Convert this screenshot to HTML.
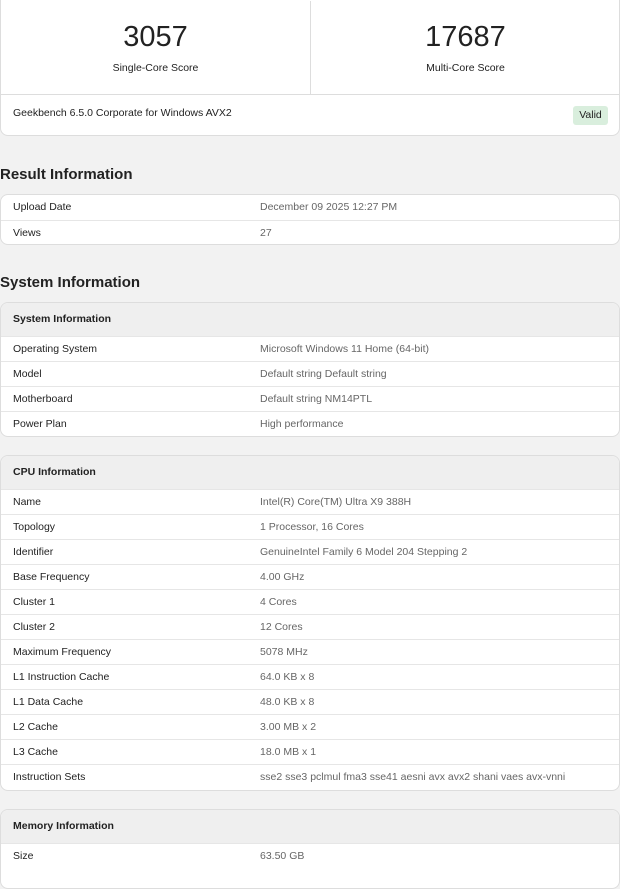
<!DOCTYPE html>
<html><head><style>
body{margin:0;background:#f2f2f2;font-family:"Liberation Sans",sans-serif;font-size:10.5px;color:#222;width:620px;height:867px;overflow:hidden;position:relative}
.card{position:absolute;left:0;width:620px;background:#fff;border:1px solid #ddd;border-radius:8px;overflow:hidden;box-sizing:border-box}
.row{height:25px;line-height:25px;border-top:1px solid #e6e6e6;position:relative;padding-left:12px;box-sizing:border-box}
.row:first-child{border-top:none}
.row span{position:absolute;left:259px;color:#666}
.hd{height:33px;line-height:33px;background:#efefef;padding-left:12px;font-weight:bold;box-sizing:border-box}
h2{position:absolute;left:0;margin:0;font-size:15px;font-weight:bold;color:#222}
.sc{position:absolute;top:0;width:309px;height:93px;text-align:center}
.sc b{display:block;font-weight:normal;font-size:29px;margin-top:19px;line-height:34px;color:#222}
.sc i{display:block;font-style:normal;margin-top:8px;color:#222}
</style></head><body>
<div class="card" style="top:-8px;height:144px">
 <div class="sc" style="left:0;top:8px"><b>3057</b><i>Single-Core Score</i></div>
 <div class="sc" style="left:309px;top:8px;border-left:1px solid #ddd"><b>17687</b><i>Multi-Core Score</i></div>
 <div style="position:absolute;top:101px;left:0;right:0;border-top:1px solid #ddd"></div>
 <div style="position:absolute;top:114px;left:12px">Geekbench 6.5.0 Corporate for Windows AVX2</div>
 <div style="position:absolute;top:113px;left:572px;width:35px;height:19px;line-height:19px;text-align:center;background:#d9eedd;border-radius:3px;color:#222">Valid</div>
</div>
<h2 style="top:166px">Result Information</h2>
<div class="card" style="top:194px;height:51px">
 <div class="row">Upload Date<span>December 09 2025 12:27 PM</span></div>
 <div class="row">Views<span>27</span></div>
</div>
<h2 style="top:274px">System Information</h2>
<div class="card" style="top:302px;height:135px">
 <div class="hd">System Information</div>
 <div class="row">Operating System<span>Microsoft Windows 11 Home (64-bit)</span></div>
 <div class="row">Model<span>Default string Default string</span></div>
 <div class="row">Motherboard<span>Default string NM14PTL</span></div>
 <div class="row">Power Plan<span>High performance</span></div>
</div>
<div class="card" style="top:455px;height:336px">
 <div class="hd">CPU Information</div>
 <div class="row">Name<span>Intel(R) Core(TM) Ultra X9 388H</span></div>
 <div class="row">Topology<span>1 Processor, 16 Cores</span></div>
 <div class="row">Identifier<span>GenuineIntel Family 6 Model 204 Stepping 2</span></div>
 <div class="row">Base Frequency<span>4.00 GHz</span></div>
 <div class="row">Cluster 1<span>4 Cores</span></div>
 <div class="row">Cluster 2<span>12 Cores</span></div>
 <div class="row">Maximum Frequency<span>5078 MHz</span></div>
 <div class="row">L1 Instruction Cache<span>64.0 KB x 8</span></div>
 <div class="row">L1 Data Cache<span>48.0 KB x 8</span></div>
 <div class="row">L2 Cache<span>3.00 MB x 2</span></div>
 <div class="row">L3 Cache<span>18.0 MB x 1</span></div>
 <div class="row">Instruction Sets<span>sse2 sse3 pclmul fma3 sse41 aesni avx avx2 shani vaes avx-vnni</span></div>
</div>
<div class="card" style="top:809px;height:80px">
 <div class="hd">Memory Information</div>
 <div class="row">Size<span>63.50 GB</span></div>
</div>
</body></html>
